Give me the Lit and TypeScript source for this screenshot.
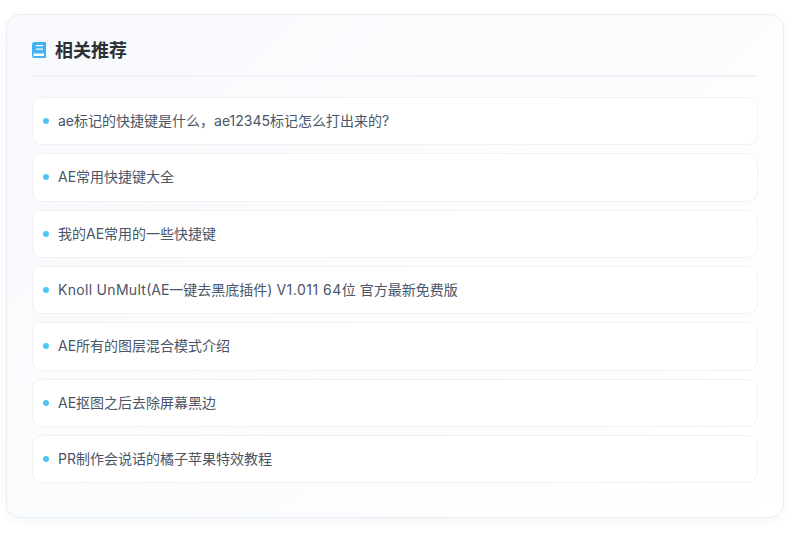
import { LitElement, html, css } from "lit";
import { customElement } from "lit/decorators.js";

const ITEMS = [
  html`ae标记的快捷键是什么，ae12345标记怎么打出来的?`,
  html`AE常用快捷键大全`,
  html`我的AE常用的一些快捷键`,
  html`<span class="wide">Knoll UnMult</span>(AE一键去黑底插件) <span class="wider">V1.011 64</span>位 官方最新免费版`,
  html`AE所有的图层混合模式介绍`,
  html`AE抠图之后去除屏幕黑边`,
  html`PR制作会说话的橘子苹果特效教程`,
];

@customElement("app-root")
export class AppRoot extends LitElement {
  static styles = css`
    :host {
      display: block;
      padding: 14px 11px 19px 6px;
      background: #fff;
      font-family: "Inter", "Noto Sans CJK SC", sans-serif;
    }
    .card {
      box-sizing: border-box;
      height: 504px;
      padding: 20px 25px 0;
      border: 1px solid #e8edf3;
      border-radius: 14px;
      background: linear-gradient(135deg, #f7f9fc 0%, #ffffff 100%);
      box-shadow: 0 3px 12px rgba(30, 60, 110, 0.04);
    }
    .head {
      display: flex;
      align-items: center;
      gap: 9px;
      height: 30px;
      padding-bottom: 10px;
      border-bottom: 2px solid #f0f2f5;
      margin-bottom: 20px;
    }
    h2 {
      margin: 1px 0 0;
      font-size: 18px;
      line-height: 30px;
      font-weight: 700;
      color: #2c3136;
    }
    svg {
      display: block;
      margin-top: -1px;
    }
    ul {
      list-style: none;
      margin: 0;
      padding: 0;
      display: flex;
      flex-direction: column;
      gap: 8px;
    }
    li {
      box-sizing: border-box;
      height: 48.33px;
      display: flex;
      align-items: center;
      gap: 9px;
      padding-left: 10px;
      background: #fff;
      border: 1px solid #f0f2f5;
      border-radius: 10px;
      font-size: 14px;
      line-height: 20px;
      color: #4a5568;
    }
    .wide { letter-spacing: 0.3px; }
    .wider { letter-spacing: 0.5px; }
    .dot {
      width: 6px;
      height: 6px;
      border-radius: 50%;
      background: #4fc3f7;
      flex: none;
    }
  `;

  render() {
    return html`<section class="card">
      <div class="head">
        <svg width="14" height="16" viewBox="0 0 14 16">
          <path d="M2.5 0H14V16H2.5A2.5 2.5 0 0 1 0 13.5V2.5A2.5 2.5 0 0 1 2.5 0Z" fill="#42b3f5" />
          <rect x="4" y="3" width="7" height="1.2" fill="#fff" />
          <rect x="4" y="6.5" width="7" height="1.2" fill="#fff" />
          <path d="M2.5 11.5H12V14H2.5A1.25 1.25 0 0 1 2.5 11.5Z" fill="#fff" />
        </svg>
        <h2>相关推荐</h2>
      </div>
      <ul>
        ${ITEMS.map((t) => html`<li><span class="dot"></span><span>${t}</span></li>`)}
      </ul>
    </section>`;
  }
}
